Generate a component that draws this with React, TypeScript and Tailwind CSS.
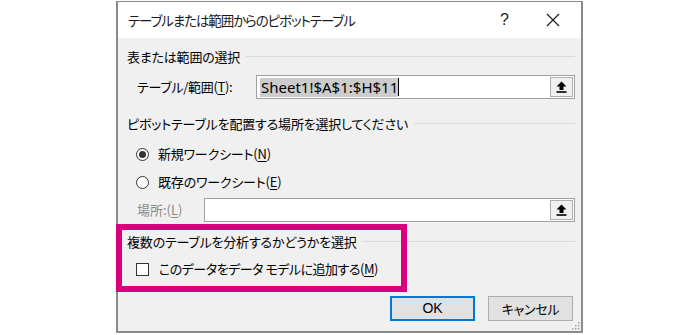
import React from 'react'

const jp = "font-['Yu_Gothic_UI','Noto_Sans_CJK_JP',sans-serif] [font-feature-settings:'palt']"

const UploadIcon = () => (
  <svg width="11" height="12" viewBox="0 0 11 12">
    <path d="M5.5 0.5 L10.5 5.5 L7.5 5.5 L7.5 9 L3.5 9 L3.5 5.5 L0.5 5.5 Z" fill="#000" />
    <rect x="0.5" y="10.2" width="10" height="1.6" fill="#000" />
  </svg>
)

const RefButton = () => (
  <div className="flex h-[20px] w-[23px] items-center justify-center border border-[#adadad] bg-[#f0f0f0]">
    <UploadIcon />
  </div>
)

const GroupHeading: React.FC<{ label: string }> = ({ label }) => (
  <div className="flex h-[18px] items-center pr-[6px]">
    <span className="whitespace-nowrap text-[13px] leading-none tracking-[-0.2px] text-black">{label}</span>
    <div className="ml-[6px] h-px flex-1 bg-[#d9d9d9]" />
  </div>
)

const U: React.FC<{ c: string }> = ({ c }) => <span className="underline underline-offset-2">{c}</span>

export default function App() {
  return (
    <div className={`h-[335px] w-[700px] overflow-hidden bg-white ${jp}`}>
      <div className="relative ml-[116px] mt-px flex h-[332px] w-[467px] flex-col border-x-2 border-b-2 border-t border-[#8a8a8a] bg-white">
        {/* Title bar */}
        <div className="flex h-[36px] shrink-0 items-center pl-[10px]">
          <span className="text-[13.5px] tracking-[-1.1px] text-[#1a1a1a]">テーブルまたは範囲からのピボットテーブル</span>
          <span className="ml-auto mr-[37px] text-[16px] text-[#222] font-['Liberation_Sans',sans-serif]">?</span>
          <svg width="14" height="14" viewBox="0 0 14 14" className="mr-[21px]">
            <path d="M1 1 L13 13 M13 1 L1 13" stroke="#222" strokeWidth="1.3" />
          </svg>
        </div>

        {/* Body */}
        <div className="flex flex-1 flex-col bg-[#f0f0f0] pl-[9px] pt-[9px]">
          <GroupHeading label="表または範囲の選択" />

          <div className="mt-[10px] flex h-[24px] items-center pr-[6px]">
            <span className="pl-[10px] text-[13px] tracking-[-0.3px] text-black">
              テーブル/範囲(<U c="T" />):
            </span>
            <div className="ml-auto flex h-[24px] w-[319px] items-center border border-[#a0a0a0] bg-white pr-px pl-[3px]">
              <span className="bg-[#cccccc] pl-px text-[15px] leading-[19px] text-black font-['Noto_Sans',sans-serif]">
                Sheet1!$A$1:$H$11
              </span>
              <span className="h-[18px] w-px bg-black" />
              <div className="ml-auto">
                <RefButton />
              </div>
            </div>
          </div>

          <div className="mt-[15px]">
            <GroupHeading label="ピボットテーブルを配置する場所を選択してください" />
          </div>

          <div className="mt-[11px] flex h-[22px] items-center pl-[9px]">
            <span className="flex h-[13px] w-[13px] items-center justify-center rounded-full border border-[#333] bg-white">
              <span className="h-[7px] w-[7px] rounded-full bg-[#333]" />
            </span>
            <span className="ml-[9px] text-[13px] tracking-[-0.2px] text-black">
              新規ワークシート(<U c="N" />)
            </span>
          </div>

          <div className="mt-[6px] flex h-[22px] items-center pl-[9px]">
            <span className="h-[13px] w-[13px] rounded-full border border-[#333] bg-white" />
            <span className="ml-[9px] text-[13px] tracking-[-0.2px] text-black">
              既存のワークシート(<U c="E" />)
            </span>
          </div>

          <div className="mt-[5px] flex h-[24px] items-center pr-[6px]">
            <span className="pl-[10px] text-[13px] text-[#8a8a8a]">
              場所:(<U c="L" />)
            </span>
            <div className="ml-auto flex h-[24px] w-[371px] items-center border border-[#a0a0a0] bg-white pr-px">
              <div className="ml-auto">
                <RefButton />
              </div>
            </div>
          </div>

          <div className="mt-[10px]">
            <GroupHeading label="複数のテーブルを分析するかどうかを選択" />
          </div>

          <div className="mt-[8px] flex h-[22px] items-center pl-[9px]">
            <span className="h-[13px] w-[13px] border border-[#333] bg-white" />
            <span className="ml-[10px] text-[13px] tracking-[-0.5px] text-black">
              このデータをデータ モデルに追加する(<U c="M" />)
            </span>
          </div>

          <div className="mt-[16px] flex justify-end gap-[13px] pr-[8px]">
            <button className="h-[25px] w-[85px] border-2 border-[#0078d7] bg-[#e1e1e1] text-[14px] text-black font-['Liberation_Sans',sans-serif]">
              OK
            </button>
            <button className="h-[25px] w-[85px] border border-[#adadad] bg-[#e1e1e1] text-[13px] tracking-[-0.3px] text-black">
              キャンセル
            </button>
          </div>

          {/* resize grip */}
          <svg width="10" height="10" viewBox="0 0 10 10" className="absolute bottom-[1px] right-[1px]">
            {[[8, 2], [5, 5], [8, 5], [2, 8], [5, 8], [8, 8]].map(([x, y], i) => (
              <rect key={i} x={x} y={y} width="1.5" height="1.5" fill="#a0a0a0" />
            ))}
          </svg>
        </div>

        {/* annotation highlight */}
        <div className="pointer-events-none absolute left-[-2px] top-[222px] h-[68px] w-[291px] border-[6px] border-[#d9007e]" />
      </div>
    </div>
  )
}
